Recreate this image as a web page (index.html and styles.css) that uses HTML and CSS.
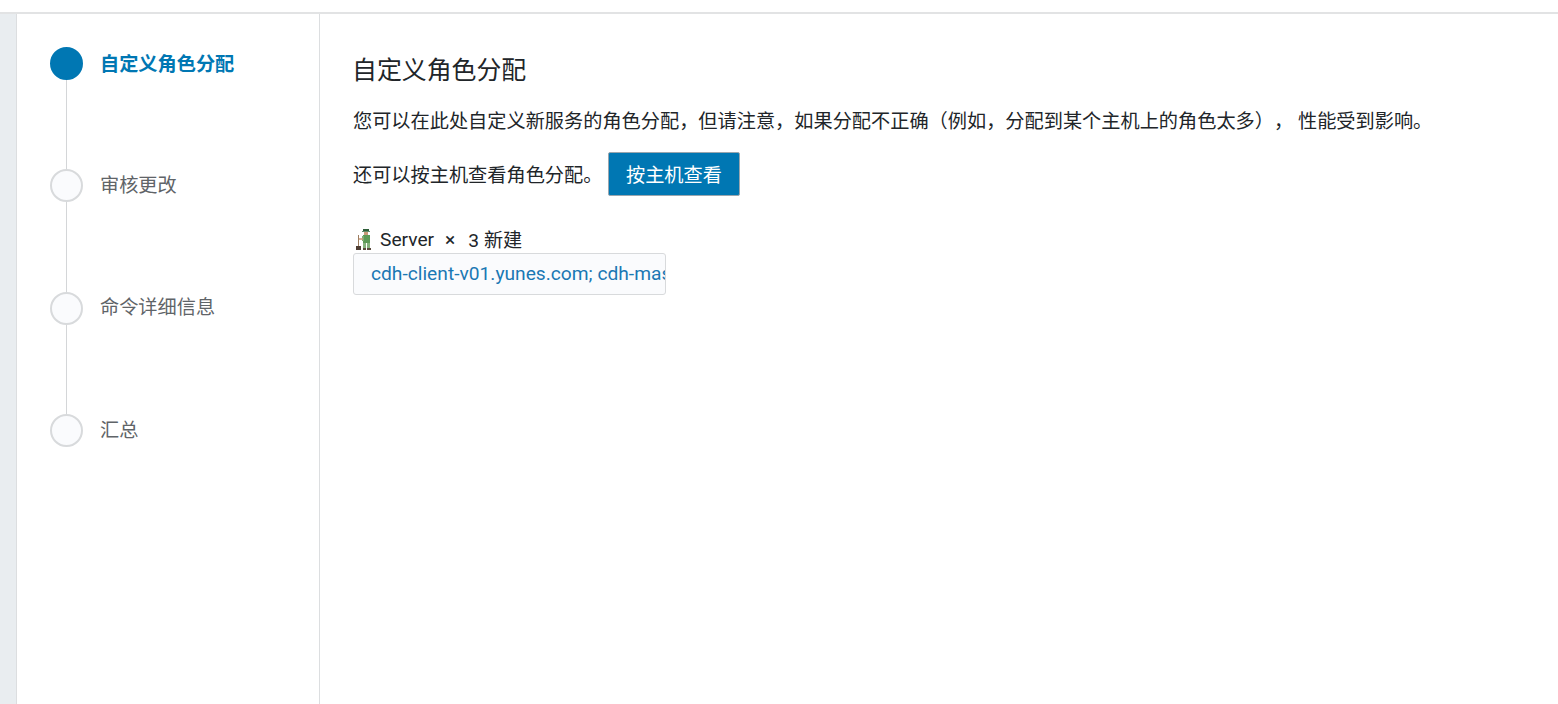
FILE: index.html
```html
<!DOCTYPE html>
<html lang="zh-CN">
<head>
<meta charset="utf-8">
<title>自定义角色分配</title>
<link rel="stylesheet" href="styles.css">
</head>
<body>
<div class="topbar"></div>
<div class="layout">
  <div class="rail"></div>
  <nav class="steps">
    <div class="step active"><span class="dot"></span><span class="label">自定义角色分配</span></div>
    <div class="step"><span class="dot"></span><span class="label">审核更改</span></div>
    <div class="step"><span class="dot"></span><span class="label">命令详细信息</span></div>
    <div class="step last"><span class="dot"></span><span class="label">汇总</span></div>
  </nav>
  <main class="content">
    <h1 class="title">自定义角色分配</h1>
    <p class="para">您可以在此处自定义新服务的角色分配，但请注意，如果分配不正确（例如，分配到某个主机上的角色太多）， 性能受到影响。</p>
    <div class="byhost"><span>还可以按主机查看角色分配。</span><button class="btn">按主机查看</button></div>
    <div class="role">
      <svg class="role-icon" width="18" height="22" viewBox="0 0 18 22">
        <rect x="8" y="0" width="6" height="2" fill="#2f5f3a"/>
        <rect x="7" y="2" width="8" height="1" fill="#3c6e46" opacity=".8"/>
        <rect x="9" y="3" width="4" height="3" fill="#c99a78"/>
        <rect x="8" y="6" width="7" height="8" fill="#5d9a58"/>
        <rect x="7" y="7" width="2" height="5" fill="#7fae72"/>
        <rect x="3" y="9" width="5" height="2" fill="#c99a78" opacity=".8"/>
        <rect x="8" y="14" width="3" height="5" fill="#86b27e"/>
        <rect x="12" y="14" width="3" height="5" fill="#86b27e"/>
        <rect x="3" y="6" width="1" height="12" fill="#9c7d60"/>
        <rect x="1" y="17" width="5" height="4" fill="#4f3d33"/>
        <rect x="8" y="19" width="3" height="2" fill="#5a4a3e"/>
        <rect x="12" y="19" width="4" height="2" fill="#5a4a3e"/>
      </svg>
      <span class="role-name">Server</span><span class="role-x">×</span><span class="role-count">3 新建</span>
    </div>
    <div class="hosts"><a class="hosts-link">cdh-client-v01.yunes.com; cdh-master-v01.yunes.com; cdh-node-v01.yunes.com</a></div>
  </main>
</div>
</body>
</html>
```
FILE: styles.css
```css
* { box-sizing: border-box; }
html, body { margin: 0; height: 100%; overflow: hidden; }
body {
  background: #fff;
  color: #212529;
  font-family: Roboto, "Noto Sans CJK SC", sans-serif;
  font-size: 19.2px;
  text-spacing-trim: space-all;
}
.topbar { height: 14px; border-bottom: 2px solid #e2e3e4; }
.layout { display: flex; height: 690px; }
.rail { width: 17px; background: #e9edf0; border-right: 1px solid #dcdee0; flex: none; }
.steps { width: 303px; flex: none; border-right: 1px solid #dcdee0; padding: 33px 0 0 33px; }
.step { display: flex; align-items: flex-start; height: 122.3px; position: relative; gap: 17px; }
.step::before {
  content: ""; position: absolute; left: 16px; top: 33px; bottom: 0; width: 1px; background: #d4d6d8;
}
.step.last::before { display: none; }
.dot {
  width: 33px; height: 33px; border-radius: 50%; flex: none;
  background: #fafbfd; border: 2px solid #d8dadc;
}
.label { color: #5f6468; line-height: 33px; margin-top: -0.4px; }
.active .dot { background: #0077b3; border-color: #0077b3; }
.active .label { color: #0077b3; font-weight: 700; margin-top: 1px; }
.content { flex: 1; padding: 0 0 0 33px; min-width: 0; }
.title { font-size: 24.9px; font-weight: 400; line-height: 32px; margin: 41px 0 0 -1px; color: #212529; }
.para { margin: 20px 0 0; line-height: 30px; white-space: nowrap; }
.byhost { display: flex; align-items: center; gap: 6px; margin-top: 15px; }
.btn {
  height: 44px; width: 132px; padding: 0 1px 0 0;
  font: inherit; color: #fff; background: #0077b3;
  border: 1px solid #9aa6ae; border-radius: 2px;
}
.role { display: flex; align-items: center; height: 24px; margin-top: 31px; }
.role-icon { flex: none; margin: 2px 7px 0 2px; }
.role-x { margin: 0 13px 0 11px; }
.hosts {
  width: 313px; height: 42px; margin-top: 2px; padding: 0 0 0 17px;
  background: #fafbfd; border: 1px solid #d8dadc; border-radius: 3px;
  overflow: hidden; white-space: nowrap; line-height: 40px;
}
.hosts-link { color: #1a78b4; }
```
